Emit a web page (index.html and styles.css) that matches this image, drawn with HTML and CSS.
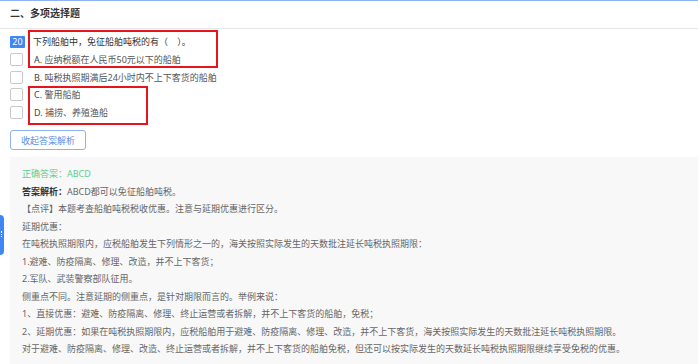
FILE: index.html
```html
<!DOCTYPE html>
<html lang="zh-CN">
<head>
<meta charset="utf-8">
<title>多项选择题</title>
<link rel="stylesheet" href="styles.css">
</head>
<body>
<div class="page">
  <div class="header">二、多项选择题</div>
  <div class="question">
    <div class="row qrow">
      <span class="badge">20</span>
      <span class="qtext">下列船舶中，免征船舶吨税的有（&nbsp;&nbsp;&nbsp;&nbsp;）。</span>
    </div>
    <div class="row"><span class="check"></span><span class="opt">A. 应纳税额在人民币50元以下的船舶</span></div>
    <div class="row"><span class="check"></span><span class="opt">B. 吨税执照期满后24小时内不上下客货的船舶</span></div>
    <div class="row"><span class="check"></span><span class="opt">C. 警用船舶</span></div>
    <div class="row"><span class="check"></span><span class="opt">D. 捕捞、养殖渔船</span></div>
    <div class="mark mark1"></div>
    <div class="mark mark2"></div>
  </div>
  <div class="btnrow"><button class="toggle">收起答案解析</button></div>
  <div class="panel">
    <p class="answer">正确答案：ABCD</p>
    <p><b>答案解析：</b>ABCD都可以免征船舶吨税。</p>
    <p>【点评】本题考查船舶吨税税收优惠。注意与延期优惠进行区分。</p>
    <p>延期优惠：</p>
    <p>在吨税执照期限内，应税船舶发生下列情形之一的，海关按照实际发生的天数批注延长吨税执照期限：</p>
    <p>1.避难、防疫隔离、修理、改造，并不上下客货；</p>
    <p>2.军队、武装警察部队征用。</p>
    <p>侧重点不同。注意延期的侧重点，是针对期限而言的。举例来说：</p>
    <p>1、直接优惠：避难、防疫隔离、修理、终止运营或者拆解，并不上下客货的船舶，免税；</p>
    <p>2、延期优惠：如果在吨税执照期限内，应税船舶用于避难、防疫隔离、修理、改造，并不上下客货，海关按照实际发生的天数批注延长吨税执照期限。</p>
    <p>对于避难、防疫隔离、修理、改造、终止运营或者拆解，并不上下客货的船舶免税，但还可以按实际发生的天数延长吨税执照期限继续享受免税的优惠。</p>
  </div>
  <div class="sidetab"><span></span></div>
</div>
</body>
</html>
```
FILE: styles.css
```css
* { box-sizing: border-box; }
html, body { margin: 0; padding: 0; background: #fff; }
body {
  font-family: "Noto Sans", "Noto Sans CJK SC", sans-serif;
  font-size: 9px;
  color: #555;
  overflow: hidden;
}
.page {
  position: relative;
  border-top: 1px solid #8fb3f5;
  height: 364px;
}
.header {
  height: 28px;
  line-height: 24px;
  padding-left: 10px;
  font-size: 10px;
  font-weight: bold;
  color: #333;
  border-bottom: 1px solid #e6e6e6;
}
.question {
  position: relative;
  padding-top: 3px;
}
.row {
  display: flex;
  align-items: center;
  height: 17.5px;
  padding-left: 10px;
}
.qrow { height: 19px; }
.badge {
  display: inline-flex;
  align-items: center;
  justify-content: center;
  width: 15px;
  height: 12px;
  background: #3f87f5;
  color: #fff;
  font-size: 9px;
  border-radius: 1px;
  margin-right: 8px;
}
.qtext { color: #333; }
.check {
  width: 13px;
  height: 13px;
  border: 1px solid #c9c9c9;
  border-radius: 2px;
  background: #fff;
  margin-right: 11px;
}
.opt { color: #555; }
.opt::first-letter { color: #444; }
.mark {
  position: absolute;
  border: 2px solid #e8141b;
}
.mark1 { left: 28px; top: 1px; width: 190px; height: 38px; }
.mark2 { left: 28px; top: 57px; width: 120px; height: 39px; }
.btnrow {
  padding: 9px 0 0 10px;
  height: 36px;
}
.toggle {
  width: 76px;
  height: 20px;
  padding: 0;
  border: 1px solid #8db2f2;
  border-radius: 3px;
  background: #fff;
  color: #5a8ee6;
  font-family: inherit;
  font-size: 9px;
}
.panel {
  margin-left: 10px;
  background: #f8f8f8;
  padding: 8px 0 20px 12px;
  height: 220px;
}
.panel p {
  margin: 0;
  line-height: 17.5px;
  white-space: nowrap;
  color: #666;
}
.panel p b { color: #333; }
.panel .answer { color: #5ccf8a; }
.sidetab {
  position: absolute;
  left: 0;
  top: 214px;
  width: 4px;
  height: 40px;
  background: #3f87f5;
  border-radius: 0 4px 4px 0;
}
.sidetab span {
  position: absolute;
  left: 1px;
  top: 16px;
  width: 2px;
  height: 6px;
  border-left: 1px dotted #fff;
}
```
